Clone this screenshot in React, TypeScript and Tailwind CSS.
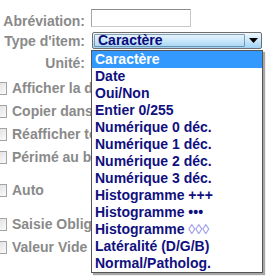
import React from 'react';

const items = [
  'Caractère',
  'Date',
  'Oui/Non',
  'Entier 0/255',
  'Numérique 0 déc.',
  'Numérique 1 déc.',
  'Numérique 2 déc.',
  'Numérique 3 déc.',
  'Histogramme +++',
  'Histogramme •••',
  'Histogramme ◊◊◊',
  'Latéralité (D/G/B)',
  'Normal/Patholog.',
];

// the open list covers the right part of these labels
const Check = ({ label, className = '' }: { label: string; className?: string }) => (
  <div className={`flex items-center h-[17px] w-[91px] overflow-hidden whitespace-nowrap ${className}`}>
    <span className="ml-[-6px] w-[13px] h-[13px] border border-[#a3a3a3] bg-gradient-to-br from-[#dcdcdc] to-[#fbfbfb] shrink-0" />
    <span className="ml-[5px] leading-[17px] text-[#8a8a8a]">{label}</span>
  </div>
);

const App = () => {
  return (
    <div className="relative w-[266px] h-[277px] overflow-hidden bg-white font-['Liberation_Sans',Arial,sans-serif] font-bold text-[14px] leading-[17px]">
      <div className="flex flex-col pt-[9px]">
        <div className="flex h-[18px]">
          <span className="w-[85px] pt-[4px] text-right text-[#8a8a8a] whitespace-nowrap">Abréviation:</span>
          <div className="ml-[6px] w-[100px] h-[18px] border border-[#c9c9c9] border-t-[#8c8c8c] border-l-[#a5a5a5] bg-white" />
        </div>

        <div className="flex h-[17px] mt-[5px]">
          <span className="w-[85px] pt-[1px] text-right text-[#8a8a8a] whitespace-nowrap">Type d'item:</span>
          <div className="ml-[7px] w-[170px] h-[17px] rounded-[2px] border border-[#6f6f6f] bg-gradient-to-b from-[#eef7fd] via-[#cbe8fb] to-[#9fd3f4] flex items-center">
            <span className="ml-[1px] h-[13px] flex-1 flex items-center border border-[#4a6580]/60 rounded-[1px] pl-[3px] text-[#0b0b7a] leading-[13px]">Caractère</span>
            <span className="w-[16px] flex justify-center">
              <svg width="9" height="5" viewBox="0 0 9 5"><path d="M0 0H9L4.5 5Z" fill="#000" /></svg>
            </span>
          </div>
        </div>

        <div className="flex h-[17px] mt-[6px]">
          <span className="w-[85px] text-right text-[#8a8a8a] whitespace-nowrap">Unité:</span>
        </div>

        <Check label="Afficher la description" className="mt-[8px]" />
        <Check label="Copier dans la note" className="mt-[6px]" />
        <Check label="Réafficher toujours" className="mt-[6px]" />
        <Check label="Périmé au bout de" className="mt-[6px]" />
        <Check label="Auto" className="mt-[16px]" />
        <Check label="Saisie Obligatoire" className="mt-[17px]" />
        <Check label="Valeur Vide" className="mt-[6px]" />
      </div>

      <ul className="absolute left-[91px] top-[50px] w-[172px] border border-[#555] bg-white shadow-[2px_2px_1px_rgba(0,0,0,0.35)]">
        {items.map((it, i) => (
          <li
            key={it}
            className={`h-[17px] pl-[3px] leading-[17px] whitespace-nowrap ${i === 0 ? 'bg-[#3399ff] text-white' : 'text-[#10107f]'}`}
          >
            {it.endsWith('◊◊◊') ? (
              <>
                Histogramme <span className="font-normal text-[#8a86e8]">◊◊◊</span>
              </>
            ) : (
              it
            )}
          </li>
        ))}
      </ul>
    </div>
  );
};

export default App;
